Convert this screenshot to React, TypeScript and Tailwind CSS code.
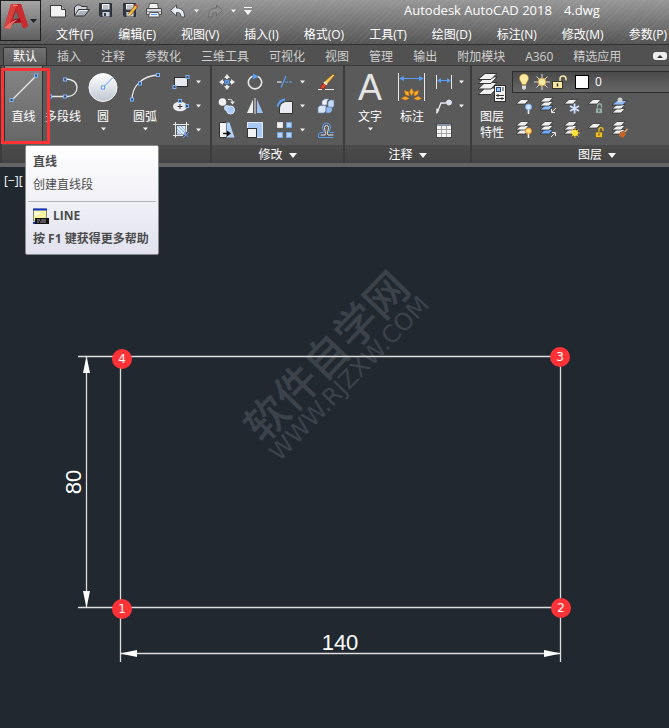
import type { ReactNode } from 'react';

interface IconProps {
  size?: number;
  children: ReactNode;
}

function Icon({ size = 18, children }: IconProps) {
  return (
    <svg width={size} height={size} viewBox={`0 0 ${size} ${size}`} fill="none" className="shrink-0" aria-hidden="true">
      {children}
    </svg>
  );
}

function Caret({ wide = false }: { wide?: boolean }) {
  return wide ? (
    <svg width="8" height="5" viewBox="0 0 8 5" className="shrink-0" aria-hidden="true">
      <path d="M0 0h8L4 5z" fill="#f4f4f4" />
    </svg>
  ) : (
    <svg width="5" height="4" viewBox="0 0 5 4" className="shrink-0" aria-hidden="true">
      <path d="M0 0.5h5L2.5 3.5z" fill="#f4f4f4" />
    </svg>
  );
}

// Blue grip square, centred on x/y.
function Grip({ x, y }: { x: number; y: number }) {
  return <rect x={x - 1.5} y={y - 1.5} width="3" height="3" fill="#3f4a5c" stroke="#7db4ff" />;
}

const ink = '#e8e8e8';
const blue = '#5b9df5';

/* ---------- quick access icons ---------- */

const NewIcon = () => (
  <Icon size={16}>
    <path d="M0.5 2.5h11l4 4v7.5h-15z" fill="#f2f2f2" stroke="#3c3c3c" />
    <path d="M11.5 2.5v4h4" fill="#b8b8b8" stroke="#3c3c3c" />
  </Icon>
);
const OpenIcon = () => (
  <Icon size={16}>
    <path d="M0.5 12.5V4l3-2h3l1 1.5h5.5V6" fill="#cfd4da" stroke="#333" />
    <path d="M0.5 13l4-6.5h11l-5 6.500z" fill="#a9b2bd" stroke="#333" />
    <path d="M2.5 12l3-4.500h8" stroke="#eef1f5" />
  </Icon>
);
const Floppy = () => (
  <>
    <path d="M1.5 0.500h12v13h-11l-1-1z" fill="#343a44" stroke="#2b3039" />
    <path d="M4 1h7.500v5.500H4z" fill="#f2f4f6" />
    <path d="M5 3h5.500M5 5h5.500" stroke="#8b929b" />
    <path d="M4.500 9h7v4.500h-7z" fill="#ccd2d9" />
    <path d="M6 10h2v3H6z" fill="#343a44" />
  </>
);
const SaveIcon = () => (
  <Icon size={16}>
    <Floppy />
  </Icon>
);
const SaveAsIcon = () => (
  <Icon size={16}>
    <Floppy />
    <path d="M6.500 10.500L13 2l2.500 2L9 12l-3 1z" fill="#f6b93b" stroke="#63461a" strokeWidth="0.700" />
    <path d="M13 2l1-1.200 2 1.800L15.500 4z" fill="#d6503f" />
    <path d="M6.500 10.500L9 12l-3 1z" fill="#fbe7c0" />
  </Icon>
);
const PrintIcon = () => (
  <Icon size={16}>
    <path d="M3.500 0.500h8l1 5h-10z" fill="#f4f4f4" stroke="#555" />
    <path d="M0.500 5.500h15v6h-15z" fill="#d9dde2" stroke="#4b4b4b" />
    <path d="M1 8.500h14" stroke="#8f969e" />
    <path d="M3.500 9.500h9l1 4.500h-11z" fill="#eef3fa" stroke="#555" />
    <path d="M5 11.500h6" stroke="#5b9df5" />
  </Icon>
);
const UndoIcon = () => (
  <Icon size={16}>
    <path d="M0.500 7.500L6.500 2v3c5 0 8 2.500 8 9h-3.500c0-3.500-1-4.500-4.500-4.500V13z" fill="#e9eef4" stroke="#4a4f56" />
  </Icon>
);
const RedoIcon = () => (
  <Icon size={16}>
    <path d="M15.500 7.500L9.500 2v3c-5 0-8 2.500-8 9H5c0-3.500 1-4.500 4.500-4.500V13z" fill="#8f8f8f" stroke="#6b6b6b" />
  </Icon>
);

function AppLogo() {
  return (
    <svg width="24" height="27" viewBox="0 0 24 27" className="shrink-0" aria-hidden="true">
      <path d="M0 25L7 1h10l7 22-4.500 2.500L17 20H8l-2 6z" fill="#bb2128" />
      <path d="M7 1h6l-3 9-4 10-1 5.500-5-0.500z" fill="#d8403f" />
      <path d="M17 1l7 22-4.500 2.500L11.500 5z" fill="#c92c31" />
      <path d="M12 7.500l3 8c-2 0-4 0.300-6 1z" fill="#6a6a6a" />
      <path d="M6 20c3-3.500 7-4.500 9.500-4.500L17 19c-4 0-8 1-11 5z" fill="#8d1119" />
      <path d="M0 25l6-5c3-2.500 5-3 8-3.500-3 2-6 4-8 9.500z" fill="#e8706a" />
      <path d="M9 2.500h5" stroke="#f08d86" />
    </svg>
  );
}

/* ---------- large ribbon icons ---------- */

const LineIcon = () => (
  <Icon size={30}>
    <path d="M4 27L27 4" stroke={ink} strokeWidth="1.300" />
    <Grip x={2.500} y={28} />
    <Grip x={27} y={3.500} />
  </Icon>
);
const PolylineIcon = () => (
  <Icon size={30}>
    <path d="M2 24.500h18c5 0 9-4 9-9s-4-8.500-12-8.500" stroke={ink} strokeWidth="1.300" />
    <Grip x={2} y={24.500} />
    <Grip x={17} y={24.500} />
    <Grip x={17} y={7.500} />
  </Icon>
);
const CircleIcon = () => (
  <Icon size={30}>
    <defs>
      <linearGradient id="disc" x1="0" y1="0" x2="0" y2="1">
        <stop offset="0" stopColor="#ffffff" />
        <stop offset="1" stopColor="#bfc6d2" />
      </linearGradient>
    </defs>
    <circle cx="15" cy="15.500" r="14" fill="url(#disc)" stroke="#f7f7f7" />
    <path d="M15 15.500L25 5.500" stroke={blue} />
    <rect x="13.500" y="14" width="3" height="3" fill="#fff" stroke={blue} />
  </Icon>
);
const ArcIcon = () => (
  <Icon size={30}>
    <path d="M2 28C2 14 12 4 28 3" stroke={ink} strokeWidth="1.300" />
    <Grip x={2} y={27.500} />
    <Grip x={10} y={11.500} />
    <Grip x={28} y={3} />
  </Icon>
);
const DimensionIcon = () => (
  <Icon size={30}>
    <path d="M1.500 1v28M27.500 1v28" stroke={ink} />
    <path d="M3 6.500h23" stroke={blue} />
    <path d="M2 6.500l5-2.500v5zM27 6.500l-5-2.500v5z" fill={blue} />
    <g fill="#ffb01f" stroke="#ef7d1a" strokeWidth="0.500">
      <path d="M14.500 16.500l2 3.500-2 3.500-2-3.500z" />
      <path d="M7.500 18.500l4 1.500 0.500 4-3.500-1.500zM21.500 18.500l-4 1.500-0.500 4 3.500-1.500z" />
      <path d="M4.500 26.500l3.500-2 4 2-3.500 1.500zM24.500 26.500l-3.500-2-4 2 3.500 1.500z" />
    </g>
  </Icon>
);
const LayerPropsIcon = () => (
  <Icon size={30}>
    <g fill="#f1f1f1" stroke="#353535">
      <path d="M1 22.500l7-6.500h12l-6 6.500z" />
      <path d="M1 17l7-6.500h12L14 17z" />
      <path d="M1 11.500L8 5h12l-6 6.500z" />
      <path d="M1 7.500L8 1.500h12l-6 6z" />
    </g>
    <rect x="17.500" y="13.500" width="11" height="16" fill="#f5f5f5" stroke="#2f2f2f" />
    <rect x="19.500" y="15.500" width="4" height="4" fill="#9cc3fa" stroke="#2c4c80" />
    <path d="M25 16h2M25 18h2M19 23.500h8M19 26.500h8M21 22v3M25 25v3" stroke="#333" />
  </Icon>
);

/* ---------- small ribbon icons ---------- */

const RectangleIcon = () => (
  <Icon>
    <rect x="2.500" y="4.500" width="13" height="9" fill="#e6e9ef" stroke="#2f2f2f" />
    <Grip x={2.500} y={14} />
    <Grip x={15.500} y={4} />
  </Icon>
);
const EllipseIcon = () => (
  <Icon>
    <ellipse cx="8" cy="9.500" rx="7" ry="4.800" fill="#e9ebef" />
    <path d="M8 7v5M5.500 9.500h5" stroke="#333" />
    <Grip x={8} y={4} />
    <Grip x={15} y={9} />
  </Icon>
);
const HatchIcon = () => (
  <Icon>
    <rect x="5" y="5" width="8.500" height="8.500" fill="#d7e6fb" />
    <path d="M5 8l5.500 5.500M5 11l2.500 2.500M6 5l7.500 7.500M9 5l4.500 4.500" stroke="#79a8e8" strokeWidth="0.800" />
    <path d="M3.500 1v15.500M14.500 1v10M1 3.500h16M1 14.500h10" stroke={ink} />
    <path d="M11 17l6-6M12 12l4.500 4" stroke={blue} />
  </Icon>
);
const MoveIcon = () => (
  <Icon>
    <path d="M9 1l3 4H6zM9 17l3-4H6zM1 9l4-3v6zM17 9l-4-3v6z" fill={ink} />
    <path d="M9 4v2M9 12v2M4 9h2M12 9h2" stroke={ink} strokeWidth="2" />
    <rect x="7.500" y="7.500" width="3" height="3" stroke={blue} strokeWidth="1.500" />
  </Icon>
);
const RotateIcon = () => (
  <Icon>
    <path d="M6.500 3.200a6.600 6.600 0 1 0 5 0" stroke={ink} strokeWidth="1.600" />
    <path d="M7 0.500l5.500 3L7 6.500z" fill={blue} />
  </Icon>
);
const TrimIcon = () => (
  <Icon>
    <path d="M1 9h4.500" stroke={ink} strokeWidth="1.200" />
    <path d="M5 14.500L10 3" stroke={blue} strokeWidth="1.200" />
    <path d="M9 9h8" stroke={blue} strokeDasharray="3 1" />
  </Icon>
);
const EraseIcon = () => (
  <Icon>
    <path d="M16 1L17.500 2.500l-8 9.500-3-2.500z" fill="#f8c85b" stroke="#8a5b13" strokeWidth="0.800" />
    <path d="M7.500 8.500l3 2.500-1.500 1.500-3-2z" fill="#f4f4f4" />
    <path d="M6 10l3 2.500-2 3-4 0.500z" fill="#e6492a" stroke="#8f2414" strokeWidth="0.700" />
    <path d="M1 16.500h4M8 16.500h9" stroke={ink} />
  </Icon>
);
const CopyIcon = () => (
  <Icon>
    <circle cx="4.500" cy="5" r="3.800" fill="#eef0f3" />
    <circle cx="9" cy="11" r="3" fill="#b9d0f2" />
    <circle cx="12.500" cy="13" r="4" fill="#a9c8f6" stroke="#dcebff" />
    <path d="M10 2.500h2.500c1.500 0 2 1 2 3" stroke={ink} />
    <path d="M12 4.500h5l-2.500 3z" fill={ink} />
  </Icon>
);
const MirrorIcon = () => (
  <Icon>
    <path d="M7 2.500V16H1z" fill="#eceef1" />
    <path d="M11 2.500V16h6z" fill="#9cc0f0" />
    <path d="M9 1v16" stroke={ink} />
  </Icon>
);
const FilletIcon = () => (
  <Icon>
    <path d="M3.500 16.500V12C3.500 7 7 4.500 11 4.500h5.500v12z" fill="#e9ebef" stroke="#333" />
    <path d="M1.500 9.500c1-4 3.500-6.500 7.500-7" stroke={blue} strokeWidth="1.800" />
  </Icon>
);
const ExplodeIcon = () => (
  <Icon>
    <path d="M5 4l3-2h4l-2 2v4H5z" fill="#eef3fa" stroke="#6e86a8" strokeWidth="0.600" />
    <path d="M11 5l2-2h4v6l-2 2h-4z" fill="#c3d8f5" stroke="#5d7ba5" strokeWidth="0.600" />
    <path d="M1 10.500l2-2h6v5.500l-2 2H1z" fill="#d6e4f7" stroke="#5d7ba5" strokeWidth="0.600" />
    <path d="M9 11l1-1h5v4l-2 2H9z" fill="#93b8ea" stroke="#4d6f9f" strokeWidth="0.600" />
  </Icon>
);
const StretchIcon = () => (
  <Icon>
    <path d="M1.500 1.500h7v15h-7z" fill="#f3f3f3" stroke="#333" />
    <path d="M8.500 1.500h3l5 15h-8z" fill="#b3d0f8" />
    <path d="M5 12.500h5" stroke="#111" strokeWidth="1.500" />
    <path d="M9 9.500l4 3-4 3z" fill="#111" />
  </Icon>
);
const ScaleIcon = () => (
  <Icon>
    <rect x="1.500" y="1.500" width="15" height="15" fill="#a9c9f5" stroke="#dde8f8" />
    <rect x="1.500" y="7.500" width="9" height="9" fill="#f0f1f3" stroke="#333" />
  </Icon>
);
const ArrayIcon = () => (
  <Icon>
    <rect x="1.500" y="1.500" width="5" height="5" fill="#f2f2f2" stroke="#ddd" />
    <g fill="#b9d2f4" stroke="#6fa3ea">
      <rect x="10.500" y="1.500" width="5" height="5" />
      <rect x="1.500" y="11.500" width="5" height="5" />
      <rect x="10.500" y="11.500" width="5" height="5" />
    </g>
  </Icon>
);
const OffsetIcon = () => (
  <Icon>
    <path d="M1.500 16.500v-2.500c0-1.500 1-2.500 2.500-2.500h2c1.500-1.500-0.500-3-0.500-5.500a4 4 0 0 1 8 0c0 2.500-2 4-0.500 5.500h4" stroke={blue} />
    <path d="M1.500 16.500h15" stroke={blue} />
    <path d="M4 14.500v-0.500h4c1.500-2-0.500-4-0.500-7.500a2 2 0 0 1 4 0c0 3.500-2 5.500-0.500 7.500h5.500" stroke={ink} />
  </Icon>
);
const LinearDimIcon = () => (
  <Icon>
    <path d="M1.500 2v14M16.500 2v14" stroke={ink} />
    <path d="M3 7.500h12" stroke={blue} />
    <path d="M2 7.500l4-2.500v5zM16 7.500l-4-2.500v5z" fill={blue} />
  </Icon>
);
const LeaderIcon = () => (
  <Icon>
    <path d="M2 16L6 6h5" stroke={ink} strokeWidth="1.300" />
    <path d="M1 17l0.500-6 3 2z" fill={ink} />
    <circle cx="14" cy="5.500" r="2.500" fill="#d7e5f8" stroke={ink} />
  </Icon>
);
const TableIcon = () => (
  <Icon>
    <rect x="1.500" y="2.500" width="15" height="14" fill="#f6f6f6" stroke="#4a4a4a" />
    <path d="M2 4h14" stroke="#8793a5" strokeWidth="2" />
    <path d="M2 8.500h14M2 12.500h14M6.500 5v11M11.500 5v11" stroke="#a5a5a5" />
  </Icon>
);

interface SheetsProps {
  count: number;
  accent?: string;
  dy?: number;
}

// Stack of layer sheets; the bottom one takes the accent colour.
function Sheets({ count, accent = '#f2f2f2', dy = 0 }: SheetsProps) {
  return (
    <>
      {Array.from({ length: count }, (_, i) => {
        const y = dy + (count - 1 - i) * 4;
        return (
          <path
            key={i}
            d={`M1 ${y + 6}l5 -4.500h8l-4 4.500z`}
            fill={i === 0 ? accent : '#f2f2f2'}
            stroke="#333"
            strokeWidth="0.800"
          />
        );
      })}
    </>
  );
}

function Padlock({ body, open = false }: { body: string; open?: boolean }) {
  return (
    <>
      <path d={open ? 'M12 11V8.500c0-2.500 4-2.500 4 0V10' : 'M10.500 11V9c0-3 4-3 4 0v2'} stroke={body} strokeWidth="1.300" />
      <rect x="8.500" y="11" width="7" height="5.500" fill={body} stroke="#4b4b3a" strokeWidth="0.600" />
      <path d="M12 12.500v2" stroke="#333" />
    </>
  );
}

function Bulb({ fill, glow }: { fill: string; glow: string }) {
  return (
    <>
      <circle cx="13.500" cy="10" r="3" fill={fill} stroke={glow} />
      <path d="M13.500 13v4" stroke="#eee" strokeWidth="1.600" />
    </>
  );
}

const layerTools: { label: string; icon: ReactNode }[] = [
  { label: '关闭图层', icon: <><Sheets count={1} dy={1} /><Bulb fill="#d3e5fd" glow="#71a8f2" /></> },
  { label: '隔离图层', icon: <><Sheets count={3} dy={-1} accent="#8cbcff" /><path d="M17 11l-4 4M12.500 12v3.500H16" stroke={ink} /></> },
  { label: '冻结图层', icon: <><Sheets count={1} dy={1} /><path d="M11.500 6.500v10M7 9l9 5M7 14l9-5" stroke="#cfe3ff" strokeWidth="1.800" /></> },
  { label: '锁定图层', icon: <><Sheets count={1} dy={1} /><Padlock body="#93aea8" /></> },
  { label: '置为当前', icon: <><Sheets count={3} dy={2} /><path d="M1 8l5-4.500h10L12 8z" fill="#8cbcff" stroke="#333" strokeWidth="0.800" /><circle cx="9" cy="3" r="2.500" fill="#d3d3d3" /></> },
  { label: '打开所有图层', icon: <><Sheets count={3} dy={-1} /><Bulb fill="#ffe27a" glow="#f08320" /></> },
  { label: '取消隔离', icon: <><Sheets count={3} dy={-1} accent="#6faaff" /><path d="M12 16l4-4M13 11.500h3.500V15" stroke={ink} /></> },
  { label: '解冻所有图层', icon: <><Sheets count={3} dy={-1} /><path d="M12 7v10M7 12h10M8.500 8.500l7 7M8.500 15.500l7-7" stroke="#f0b91f" /><circle cx="12" cy="12" r="3" fill="#ffe53b" /></> },
  { label: '解锁图层', icon: <><Sheets count={1} dy={1} /><Padlock body="#f5bd1d" open /></> },
  { label: '匹配图层', icon: <><Sheets count={3} dy={-1} /><path d="M16.500 8l-3 3" stroke="#e0aa6a" strokeWidth="1.600" /><path d="M9 11l3-1 3 3-3 4-4-2z" fill="#c76524" /></> },
];

const quickTools = [
  { label: '新建', icon: <NewIcon /> },
  { label: '打开', icon: <OpenIcon /> },
  { label: '保存', icon: <SaveIcon /> },
  { label: '另存为', icon: <SaveAsIcon /> },
  { label: '打印', icon: <PrintIcon /> },
];

const menus = [
  '文件(F)', '编辑(E)', '视图(V)', '插入(I)', '格式(O)', '工具(T)', '绘图(D)', '标注(N)', '修改(M)', '参数(P)',
];

const tabs = [
  '默认', '插入', '注释', '参数化', '三维工具', '可视化', '视图', '管理', '输出', '附加模块', 'A360', '精选应用',
];

const modifyTools: { label: string; icon: ReactNode; menu?: boolean }[] = [
  { label: '移动', icon: <MoveIcon /> },
  { label: '旋转', icon: <RotateIcon /> },
  { label: '修剪', icon: <TrimIcon />, menu: true },
  { label: '删除', icon: <EraseIcon /> },
  { label: '复制', icon: <CopyIcon /> },
  { label: '镜像', icon: <MirrorIcon /> },
  { label: '圆角', icon: <FilletIcon />, menu: true },
  { label: '分解', icon: <ExplodeIcon /> },
  { label: '拉伸', icon: <StretchIcon /> },
  { label: '缩放', icon: <ScaleIcon /> },
  { label: '阵列', icon: <ArrayIcon />, menu: true },
  { label: '偏移', icon: <OffsetIcon /> },
];

interface BigToolProps {
  label: string;
  icon: ReactNode;
  width: string;
  menu?: boolean;
}

function BigTool({ label, icon, width, menu }: BigToolProps) {
  return (
    <button type="button" className={`flex shrink-0 flex-col items-center pt-1.5 whitespace-nowrap ${width}`}>
      {icon}
      <span className="mt-[5px] leading-5">{label}</span>
      {menu ? <Caret /> : null}
    </button>
  );
}

interface SmallToolProps {
  label: string;
  icon: ReactNode;
  menu?: boolean;
}

function SmallTool({ label, icon, menu }: SmallToolProps) {
  return (
    <button type="button" aria-label={label} className="flex h-6 items-center gap-1.5">
      {icon}
      {menu ? <Caret /> : null}
    </button>
  );
}

interface PanelProps {
  title: string;
  className: string;
  children: ReactNode;
}

function Panel({ title, className, children }: PanelProps) {
  return (
    <section className={`shrink-0 border-r-2 border-[#3b3b3b] ${className}`}>
      <div className="flex h-[79px]">{children}</div>
      <button
        type="button"
        className="flex h-[18px] w-full items-center justify-center gap-1.5 bg-linear-to-b from-[#4b4b4b] to-[#444444] pt-0.5"
      >
        {title}
        <Caret wide />
      </button>
    </section>
  );
}

function TitleBar() {
  return (
    <header className="flex h-[45px] border-b border-[#303030] bg-[repeating-linear-gradient(135deg,rgba(255,255,255,0.05)_0px,rgba(255,255,255,0.05)_1px,transparent_1px,transparent_4px),linear-gradient(to_bottom,#979797,#555555)]">
      <button
        type="button"
        aria-label="应用程序菜单"
        className="flex h-[41px] w-[41px] shrink-0 items-center justify-center gap-0.5 border border-[#1e1e1e] bg-linear-to-b from-[#a5a5a5] to-[#5f5f5f] pb-2"
      >
        <AppLogo />
        <svg width="7" height="4" viewBox="0 0 7 4" className="mt-2 shrink-0" aria-hidden="true">
          <path d="M0 0h7L3.500 4z" fill="#20242b" />
        </svg>
      </button>
      <div className="min-w-0 flex-1">
        <div className="flex h-[22px] items-center gap-2 pl-[9px]">
          {quickTools.map((tool) => (
            <button key={tool.label} type="button" aria-label={tool.label}>
              {tool.icon}
            </button>
          ))}
          <button type="button" aria-label="放弃" className="flex items-center gap-2">
            <UndoIcon />
            <Caret />
          </button>
          <button type="button" aria-label="重做" className="flex items-center gap-2">
            <RedoIcon />
            <Caret />
          </button>
          <button type="button" aria-label="自定义快速访问工具栏" className="flex flex-col items-center gap-0.5">
            <span className="h-px w-2 bg-white" />
            <Caret wide />
          </button>
          <h1 className="ml-36 flex gap-3 text-[13px] whitespace-nowrap">
            <span>Autodesk AutoCAD 2018</span>
            <span>4.dwg</span>
          </h1>
        </div>
        <nav className="flex h-[23px] items-center gap-[25px] pt-0.5 pl-[15px] whitespace-nowrap">
          {menus.map((menu) => (
            <button key={menu} type="button">
              {menu}
            </button>
          ))}
        </nav>
      </div>
    </header>
  );
}

function TabBar() {
  return (
    <nav className="flex h-[21px] items-end border-b border-[#3a3a3a] bg-[#515151] pl-[3px] whitespace-nowrap">
      {tabs.map((tab, i) => (
        <button
          key={tab}
          type="button"
          className={
            i === 0
              ? 'h-[18px] rounded-t-xs border border-b-0 border-[#303030] bg-linear-to-b from-[#737373] to-[#5c5c5c] px-[9px] leading-[18px] text-white'
              : 'h-[18px] px-2.5 leading-5 text-[#cfcfcf]'
          }
        >
          {tab}
        </button>
      ))}
      <button
        type="button"
        aria-label="最小化功能区"
        className="mb-[5px] ml-[22px] flex h-2 w-3.5 shrink-0 items-center justify-center rounded-[3px] bg-[#ececec]"
      >
        <svg width="6" height="3" viewBox="0 0 6 3" aria-hidden="true">
          <path d="M0 3h6L3 0z" fill="#333" />
        </svg>
      </button>
    </nav>
  );
}

function DrawPanel() {
  return (
    <Panel title="绘图" className="w-[212px] border-l-2">
      <div className="relative ml-0.5 h-[77px] w-[39px] shrink-0 border-x border-[#303030] bg-linear-to-b from-[#858585] to-[#666666]">
        <BigTool label="直线" icon={<LineIcon />} width="w-[37px]" />
        <span className="pointer-events-none absolute -left-1 top-0.5 z-10 h-[76px] w-[49px] border-[3px] border-[#ff3333]" />
        <LineTooltip />
      </div>
      <BigTool label="多段线" icon={<PolylineIcon />} width="w-10" />
      <BigTool label="圆" icon={<CircleIcon />} width="w-10" menu />
      <BigTool label="圆弧" icon={<ArcIcon />} width="w-11" menu />
      <div className="flex flex-col pt-1 pl-[5px]">
        <SmallTool label="矩形" icon={<RectangleIcon />} menu />
        <SmallTool label="椭圆" icon={<EllipseIcon />} menu />
        <SmallTool label="图案填充" icon={<HatchIcon />} menu />
      </div>
    </Panel>
  );
}

function LineTooltip() {
  return (
    <div
      role="tooltip"
      className="absolute top-[79px] left-5 z-20 w-[134px] rounded-xs border border-[#8a8a8a] bg-linear-to-b from-white to-[#e2e2ef] pt-1.5 pb-[5px] text-[#4c4c4c]"
    >
      <p className="px-[7px] leading-5 font-bold">直线</p>
      <p className="mt-[3px] px-[7px] leading-5">创建直线段</p>
      <hr className="mx-0.5 mt-1.5 mb-1 border-[#b4b4bd]" />
      <p className="flex items-center gap-1 px-[7px] leading-5 font-bold">
        <Icon size={16}>
          <path d="M0.500 1h13v12H0.500z" fill="#f6f3a0" stroke="#8a8a70" />
          <path d="M0 1.500h14" stroke="#1532c8" strokeWidth="2" />
          <path d="M2 9V4h6z" fill="#fffde2" />
          <path d="M2 10h14v6H2z" fill="#111" />
          <path d="M4 12h3M8 12h5M4 14h2M7 14h6" stroke="#9a9a9a" />
          <path d="M0 14h2v2H0z" fill="#1532c8" />
        </Icon>
        LINE
      </p>
      <p className="mt-[3px] px-[7px] leading-5 font-bold whitespace-nowrap">按 F1 键获得更多帮助</p>
    </div>
  );
}

function ModifyPanel() {
  return (
    <Panel title="修改" className="w-[133px]">
      <div className="grid auto-rows-[24px] grid-cols-[28px_30px_41px_auto] content-start pt-1 pl-1.5">
        {modifyTools.map((tool) => (
          <SmallTool key={tool.label} {...tool} />
        ))}
      </div>
    </Panel>
  );
}

function AnnotatePanel() {
  return (
    <Panel title="注释" className="w-[127px]">
      <BigTool
        label="文字"
        width="w-[50px]"
        menu
        icon={<span className="h-[30px] font-['Liberation_Sans'] text-[36px] leading-[32px] text-[#e4e4e4]">A</span>}
      />
      <BigTool label="标注" icon={<DimensionIcon />} width="w-[34px]" />
      <div className="flex flex-col pt-1 pl-1.5">
        <SmallTool label="线性" icon={<LinearDimIcon />} menu />
        <SmallTool label="引线" icon={<LeaderIcon />} menu />
        <SmallTool label="表格" icon={<TableIcon />} />
      </div>
    </Panel>
  );
}

function LayerPanel() {
  return (
    <Panel title="图层" className="min-w-[252px] flex-1">
      <button type="button" className="flex w-10 shrink-0 flex-col items-center pt-1.5 leading-4">
        <LayerPropsIcon />
        <span className="mt-[7px]">图层</span>
        <span>特性</span>
      </button>
      <div className="min-w-0 flex-1 pt-[5px]">
        <label className="mb-px flex h-[22px] items-center border border-[#2e2e2e] bg-linear-to-b from-[#4a4a4a] to-[#666666] pl-0.5">
          <Icon>
            <path d="M9 1c-3 0-4.500 2-4.500 4.500 0 2 2 3.500 2.500 6h4c0.500-2.500 2.500-4 2.500-6C13.500 3 12 1 9 1z" fill="#fdeaa0" stroke="#b58a2c" strokeWidth="0.600" />
            <path d="M7 12.500h4v3l-2 1.500-2-1.500z" fill="#dcdcdc" />
          </Icon>
          <Icon>
            <path d="M9 1v16M1 9h16M3.500 3.500l11 11M3.500 14.500l11-11" stroke="#dcdcdc" />
            <circle cx="9" cy="9" r="4" fill="#fbe9a6" stroke="#c79a45" />
          </Icon>
          <Icon>
            <path d="M9 9V6c0-4 6-4 6 0v1.500" stroke="#fbe9a6" strokeWidth="1.500" />
            <rect x="1.500" y="8.500" width="10" height="7" fill="#fbe9a6" stroke="#3b3524" />
            <path d="M6.500 10.500v3" stroke="#333" strokeWidth="1.500" />
          </Icon>
          <span className="mx-1.5 h-3.5 w-3.5 border border-black bg-white" />
          <select aria-label="图层" className="flex-1 appearance-none bg-transparent text-white outline-none">
            <option>0</option>
          </select>
        </label>
        <div className="grid auto-rows-[24px] grid-cols-[repeat(5,24px)]">
          {layerTools.map((tool) => (
            <button key={tool.label} type="button" aria-label={tool.label} className="flex items-center justify-center">
              <Icon>{tool.icon}</Icon>
            </button>
          ))}
        </div>
      </div>
    </Panel>
  );
}

const markers = [
  { id: 1, x: 122, y: 442 },
  { id: 2, x: 561, y: 441 },
  { id: 3, x: 560, y: 190 },
  { id: 4, x: 122, y: 192 },
];

function Drawing() {
  return (
    <svg width="669" height="561" viewBox="0 0 669 561" className="block">
      <g transform="translate(327 190) rotate(-46)" fill="#3c424a" textAnchor="middle">
        <text y="15" fontSize="43" fontWeight="500" className="font-['Noto_Sans_CJK_SC',sans-serif]">
          软件自学网
        </text>
        <text y="39" fontSize="24" className="font-['DejaVu_Sans',sans-serif]">
          WWW.RJZXW.COM
        </text>
      </g>
      <g stroke="#dedede" strokeWidth="1.300">
        <path d="M78 189.500H560.500M78 440.500H560.500M120.500 189.500V495M560.500 189.500V495" />
        <path d="M86.500 190V440M121 486.500H560" />
      </g>
      <g fill="#ffffff">
        <path d="M86.500 189l3.500 17h-7zM86.500 441l3.500-17h-7zM120 486.500l17-3.500v7zM561 486.500l-17-3.500v7z" />
        <g fontSize="22" textAnchor="middle" className="font-['Liberation_Sans',sans-serif]">
          <text x="340" y="483">140</text>
          <text transform="translate(81 315) rotate(-90)">80</text>
        </g>
      </g>
      {markers.map((marker) => (
        <g key={marker.id}>
          <circle cx={marker.x} cy={marker.y} r="10" fill="#ff3337" />
          <text
            x={marker.x}
            y={marker.y + 4}
            fontSize="12"
            fill="#ffffff"
            textAnchor="middle"
            className="font-['DejaVu_Sans',sans-serif]"
          >
            {marker.id}
          </text>
        </g>
      ))}
    </svg>
  );
}

export default function App() {
  return (
    <div className="flex min-h-screen flex-col overflow-hidden bg-[#212830] font-['Open_Sans','Noto_Sans_CJK_SC',sans-serif] text-xs text-white">
      <TitleBar />
      <TabBar />
      <div className="flex border-b-4 border-[#646464] bg-[#5a5a5a]">
        <DrawPanel />
        <ModifyPanel />
        <AnnotatePanel />
        <LayerPanel />
      </div>
      <main className="relative flex-1">
        <span className="absolute top-1 left-1 leading-5">[−][</span>
        <Drawing />
      </main>
    </div>
  );
}
